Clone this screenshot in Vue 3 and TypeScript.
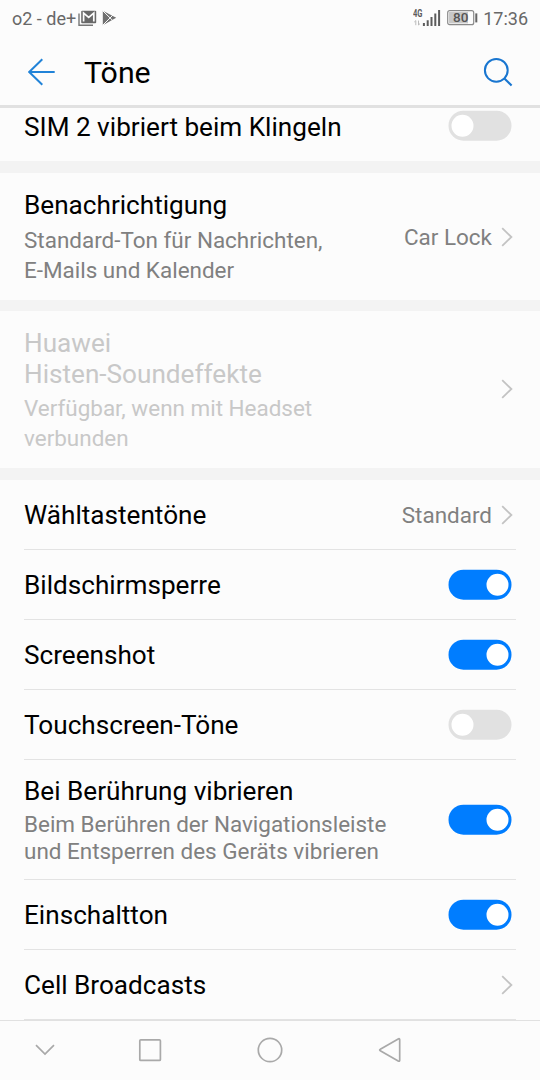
<script setup lang="ts">
interface Row {
  key: string
  title: string[]
  summary?: string[]
  value?: string
  toggle?: boolean
  disabled?: boolean
}

const groups: { key: string; rows: Row[] }[] = [
  { key: 'sim', rows: [{ key: 'sim-row', title: ['SIM 2 vibriert beim Klingeln'], toggle: false }] },
  {
    key: 'notify',
    rows: [
      {
        key: 'notify-row',
        title: ['Benachrichtigung'],
        summary: ['Standard-Ton für Nachrichten,', 'E-Mails und Kalender'],
        value: 'Car Lock',
      },
    ],
  },
  {
    key: 'histen',
    rows: [
      {
        key: 'histen-row',
        title: ['Huawei', 'Histen-Soundeffekte'],
        summary: ['Verfügbar, wenn mit Headset', 'verbunden'],
        disabled: true,
      },
    ],
  },
  {
    key: 'system',
    rows: [
      { key: 'dial', title: ['Wähltastentöne'], value: 'Standard' },
      { key: 'lock', title: ['Bildschirmsperre'], toggle: true },
      { key: 'shot', title: ['Screenshot'], toggle: true },
      { key: 'touch', title: ['Touchscreen-Töne'], toggle: false },
      {
        key: 'haptic',
        title: ['Bei Berührung vibrieren'],
        summary: ['Beim Berühren der Navigationsleiste', 'und Entsperren des Geräts vibrieren'],
        toggle: true,
      },
      { key: 'boot', title: ['Einschaltton'], toggle: true },
      { key: 'cell', title: ['Cell Broadcasts'] },
    ],
  },
]
</script>

<template>
  <div class="screen">
    <header class="statusbar">
      <span class="carrier">o2 - de+</span>
      <svg class="mail" width="19" height="17" viewBox="0 0 19 17">
        <path d="M1 3.5V15.3H15" fill="none" stroke="#777" stroke-width="1.4" />
        <rect x="3.2" y="0.8" width="15" height="12.4" rx="1" fill="#686868" />
        <path d="M5.6 11.6V3L10.7 7.4L15.8 3V11.6" fill="none" stroke="#fcfcfc" stroke-width="1.7" />
      </svg>
      <svg class="play" width="15" height="16" viewBox="0 0 15 16">
        <path d="M.8 .8L14.2 7.8L.8 15.2Z" fill="#707070" />
        <path d="M1 1L10.8 10.6M1 15L10.8 5.2" stroke="#fcfcfc" stroke-width="1" />
      </svg>
      <span class="grow"></span>
      <svg class="signal" width="28" height="19" viewBox="0 0 28 19">
        <text x="0" y="8.3" class="net" textLength="9.5" lengthAdjust="spacingAndGlyphs">4G</text>
        <path d="M2.8 16.2V11.6M1.3 13L2.8 11.6M5.5 11.6V16M7 14.6L5.5 16" stroke="#bbb" stroke-width="1" fill="none" />
        <path d="M10.9 14V17M14.7 11.3V17M18.5 8V17M22.3 4.6V17M26.1 1V17" stroke="#5c5c5c" stroke-width="2" />
      </svg>
      <svg class="battery" width="31" height="16" viewBox="0 0 31 16">
        <rect x="0.7" y="0.7" width="26" height="14" rx="2" fill="#fcfcfc" stroke="#8a8a8a" stroke-width="1.2" />
        <rect x="2" y="2" width="19" height="11.4" fill="#c8c8c8" />
        <rect x="28.3" y="3.4" width="2" height="9" fill="#666" />
        <text x="13.7" y="12.2" text-anchor="middle" class="pct">80</text>
      </svg>
      <span class="clock">17:36</span>
    </header>

    <div class="titlebar">
      <svg width="28" height="28" viewBox="0 0 28 28" class="back">
        <path d="M14.3 1.2L1.2 14L14.3 26.8M1.4 14H26.7" fill="none" stroke="#2183d8" stroke-width="2" />
      </svg>
      <h1>Töne</h1>
      <span class="grow"></span>
      <svg width="30" height="30" viewBox="0 0 30 30" class="search">
        <circle cx="13.3" cy="13.3" r="11.4" fill="none" stroke="#1976d0" stroke-width="2" />
        <path d="M21.2 21.2L28.6 28.6" stroke="#1976d0" stroke-width="2.1" />
      </svg>
    </div>

    <main>
      <section v-for="g in groups" :key="g.key" class="group" :class="g.key">
        <div v-for="r in g.rows" :key="r.key" class="row" :class="[r.key, { disabled: r.disabled }]">
          <div class="copy">
            <div v-for="t in r.title" :key="t" class="title">{{ t }}</div>
            <div v-if="r.summary" class="summary">
              <div v-for="s in r.summary" :key="s">{{ s }}</div>
            </div>
          </div>
          <span v-if="r.toggle !== undefined" class="switch" :class="{ on: r.toggle }"><i></i></span>
          <template v-else>
            <span v-if="r.value" class="value">{{ r.value }}</span>
            <svg class="chevron" width="12" height="20" viewBox="0 0 12 20">
              <path d="M1.2 1.2L10.4 10L1.2 18.8" fill="none" stroke="#c3c3c3" stroke-width="1.8" />
            </svg>
          </template>
        </div>
      </section>
    </main>

    <nav>
      <svg width="540" height="59" viewBox="0 0 540 59" fill="none" stroke="#a9a9a9" stroke-width="1.7">
        <path d="M36 24.2L45 33L54 24.2" />
        <rect x="139.8" y="18.8" width="20.6" height="20.6" rx="1" />
        <circle cx="270" cy="29" r="11.7" />
        <path d="M380.3 28.3L398.2 17.9Q399.7 17.2 399.7 18.8V39.2Q399.7 40.8 398.2 40L380.3 29.7Q379 29 380.3 28.3Z" />
      </svg>
    </nav>
  </div>
</template>

<style>
body { margin: 0; background: #fcfcfc; }
</style>

<style scoped>
.screen {
  width: 540px;
  height: 1080px;
  box-sizing: border-box;
  background: #fcfcfc;
  color: #000;
  font-family: Roboto, "Liberation Sans", sans-serif;
  overflow: hidden;
  display: flex;
  flex-direction: column;
}
svg { display: block; flex: none; }
.grow { flex: 1; }
.statusbar {
  height: 37px;
  display: flex;
  align-items: center;
  padding: 0 12px;
  color: #686868;
  font-size: 18px;
  flex: none;
}
.mail { margin-left: 2px; }
.play { margin: 0 0 1px 5px; }
.net { font: 700 10.5px Roboto, sans-serif; fill: #5c5c5c; }
.battery { margin: 0 5px 1px 6px; }
.pct { font: 500 13.5px Roboto, sans-serif; fill: #555; }
.titlebar {
  height: 68px;
  display: flex;
  align-items: center;
  padding: 1px 27px 0;
  box-sizing: border-box;
  flex: none;
}
main { border-top: 3px solid #e1e1e1; }
.back { margin-left: 1px; }
h1 { margin: 2px 0 0 28px; font-size: 30.3px; line-height: 36px; font-weight: 400; }
.group + .group { border-top: 12px solid #f3f3f3; }
.row {
  box-sizing: border-box;
  height: 70px;
  margin: 0 24px;
  display: flex;
  align-items: center;
  border-bottom: 1px solid #e3e3e3;
}
.copy { flex: 1; white-space: nowrap; }
.title { font-size: 26.15px; line-height: 31px; margin-top: 2px; }
.summary { font-size: 22.46px; line-height: 29.5px; color: #808080; margin-top: 4px; }
.value { font-size: 22.46px; color: #808080; margin: 1px 9px 0 0; }
.chevron { margin-right: 3px; }
.sim-row { height: 53px; border: 0; padding-bottom: 17px; }
.sim-row .title { margin-top: 3px; }
.notify-row { height: 127px; border: 0; }
.notify-row .summary { margin-top: 5px; }
.histen .row { height: 157px; border: 0; }
.histen .title + .title { margin-top: 0; }
.histen .chevron { margin-bottom: 1px; }
.group.histen { border-top-width: 11px; }
.haptic { height: 120px; }
.haptic .title { margin-top: 1px; }
.haptic .summary { line-height: 26.5px; margin-top: 4px; }
.disabled .title, .disabled .summary { color: #c8c8c8; }
.switch {
  width: 63px;
  height: 30px;
  border-radius: 15px;
  background: #e1e1e1;
  box-sizing: border-box;
  padding: 4px 3px;
  display: flex;
  margin-right: 4.5px;
  transform: translate(-0.5px, -0.3px);
}
.switch i { width: 22px; height: 22px; border-radius: 50%; background: #fff; }
.switch.on { background: #007dff; justify-content: flex-end; }
nav { border-top: 1px solid #e1e1e1; height: 59px; flex: none; }
</style>
